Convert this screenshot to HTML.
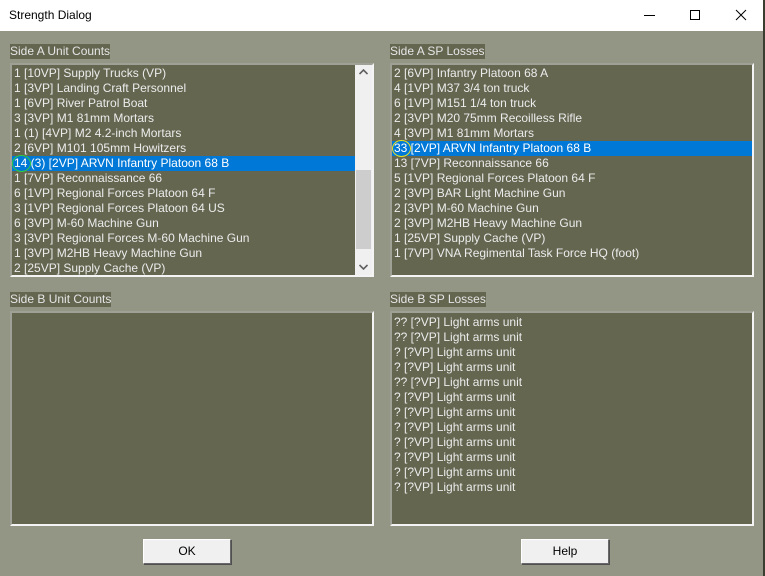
<!DOCTYPE html>
<html><head><meta charset="utf-8"><style>
*{margin:0;padding:0;box-sizing:border-box}
body{width:765px;height:576px;background:#3a3d30;position:relative;overflow:hidden;font-family:"Liberation Sans",Arial,sans-serif;font-size:12px}
#win{position:absolute;left:0;top:0;width:763px;height:576px;background:#939585}
#title{position:absolute;left:0;top:0;width:763px;height:31px;background:#fff;color:#000}
#title .t{position:absolute;left:9px;top:8px;font-size:12px}
.lbl{position:absolute;height:15px;line-height:15px;background:#646650;color:#e6e6e6;padding:0;font-size:12px}
.box{position:absolute;background:#646650;border-top:2px solid #a0a196;border-left:2px solid #a0a196;border-right:2px solid #f4f4f4;border-bottom:2px solid #f4f4f4;overflow:hidden}
.row{height:15px;line-height:15px;color:#ececec;padding-left:2px;white-space:nowrap;position:relative}
.sel{background:#0078d7;color:#fff}
.circ{position:absolute;left:0;top:-1px;width:19px;height:17px;border-radius:50%;border:1.5px solid}
.sb{position:absolute;right:0;top:0;width:17px;height:100%;background:#f0f0f0}
.thumb{position:absolute;left:1px;top:105px;width:15px;height:79px;background:#cdcdcd}
.btn{position:absolute;width:88px;height:25px;background:#f0f0f0;border:1px solid #fff;border-right-color:#696969;border-bottom-color:#696969;box-shadow:1px 1px 0 #505050;text-align:center;line-height:23px;color:#000}
</style></head><body>
<div id="win">
<div id="title"><span class="t">Strength Dialog</span>
<svg style="position:absolute;left:640px;top:8px" width="120" height="16"><line x1="4" y1="7.5" x2="15" y2="7.5" stroke="#000"/><rect x="50.5" y="2.5" width="9" height="9" fill="none" stroke="#000"/><path d="M96 2L106 12M106 2L96 12" stroke="#000"/></svg>
</div>

<div class="lbl" style="left:10px;top:44px">Side A Unit Counts</div>
<div class="box" style="left:10px;top:63px;width:364px;height:214px;padding-top:1px">
<div class="row">1 [10VP] Supply Trucks (VP)</div>
<div class="row">1 [3VP] Landing Craft Personnel</div>
<div class="row">1 [6VP] River Patrol Boat</div>
<div class="row">3 [3VP] M1 81mm Mortars</div>
<div class="row">1 (1) [4VP] M2 4.2-inch Mortars</div>
<div class="row">2 [6VP] M101 105mm Howitzers</div>
<div class="row sel" style="margin-right:17px"><span class="circ" style="border-color:#2ecc40"></span>14 (3) [2VP] ARVN Infantry Platoon 68 B</div>
<div class="row">1 [7VP] Reconnaissance 66</div>
<div class="row">6 [1VP] Regional Forces Platoon 64 F</div>
<div class="row">3 [1VP] Regional Forces Platoon 64 US</div>
<div class="row">6 [3VP] M-60 Machine Gun</div>
<div class="row">3 [3VP] Regional Forces M-60 Machine Gun</div>
<div class="row">1 [3VP] M2HB Heavy Machine Gun</div>
<div class="row">2 [25VP] Supply Cache (VP)</div>
<div class="sb"><svg style="position:absolute;left:4px;top:4px" width="9" height="6"><path d="M0.5 5L4.5 1L8.5 5" fill="none" stroke="#606060" stroke-width="1.6"/></svg><div class="thumb"></div><svg style="position:absolute;left:4px;bottom:5px" width="9" height="6"><path d="M0.5 1L4.5 5L8.5 1" fill="none" stroke="#606060" stroke-width="1.6"/></svg></div>
</div>

<div class="lbl" style="left:390px;top:44px">Side A SP Losses</div>
<div class="box" style="left:390px;top:63px;width:364px;height:214px;padding-top:1px">
<div class="row">2 [6VP] Infantry Platoon 68 A</div>
<div class="row">4 [1VP] M37 3/4 ton truck</div>
<div class="row">6 [1VP] M151 1/4 ton truck</div>
<div class="row">2 [3VP] M20 75mm Recoilless Rifle</div>
<div class="row">4 [3VP] M1 81mm Mortars</div>
<div class="row sel"><span class="circ" style="border-color:#e8e020"></span>33 [2VP] ARVN Infantry Platoon 68 B</div>
<div class="row">13 [7VP] Reconnaissance 66</div>
<div class="row">5 [1VP] Regional Forces Platoon 64 F</div>
<div class="row">2 [3VP] BAR Light Machine Gun</div>
<div class="row">2 [3VP] M-60 Machine Gun</div>
<div class="row">2 [3VP] M2HB Heavy Machine Gun</div>
<div class="row">1 [25VP] Supply Cache (VP)</div>
<div class="row">1 [7VP] VNA Regimental Task Force HQ (foot)</div>
</div>

<div class="lbl" style="left:10px;top:292px">Side B Unit Counts</div>
<div class="box" style="left:10px;top:311px;width:364px;height:215px"></div>

<div class="lbl" style="left:390px;top:292px">Side B SP Losses</div>
<div class="box" style="left:390px;top:311px;width:364px;height:215px;padding-top:2px">
<div class="row">?? [?VP] Light arms unit</div>
<div class="row">?? [?VP] Light arms unit</div>
<div class="row">? [?VP] Light arms unit</div>
<div class="row">? [?VP] Light arms unit</div>
<div class="row">?? [?VP] Light arms unit</div>
<div class="row">? [?VP] Light arms unit</div>
<div class="row">? [?VP] Light arms unit</div>
<div class="row">? [?VP] Light arms unit</div>
<div class="row">? [?VP] Light arms unit</div>
<div class="row">? [?VP] Light arms unit</div>
<div class="row">? [?VP] Light arms unit</div>
<div class="row">? [?VP] Light arms unit</div>
</div>

<div class="btn" style="left:143px;top:539px">OK</div>
<div class="btn" style="left:521px;top:539px">Help</div>
</div>
</body></html>
